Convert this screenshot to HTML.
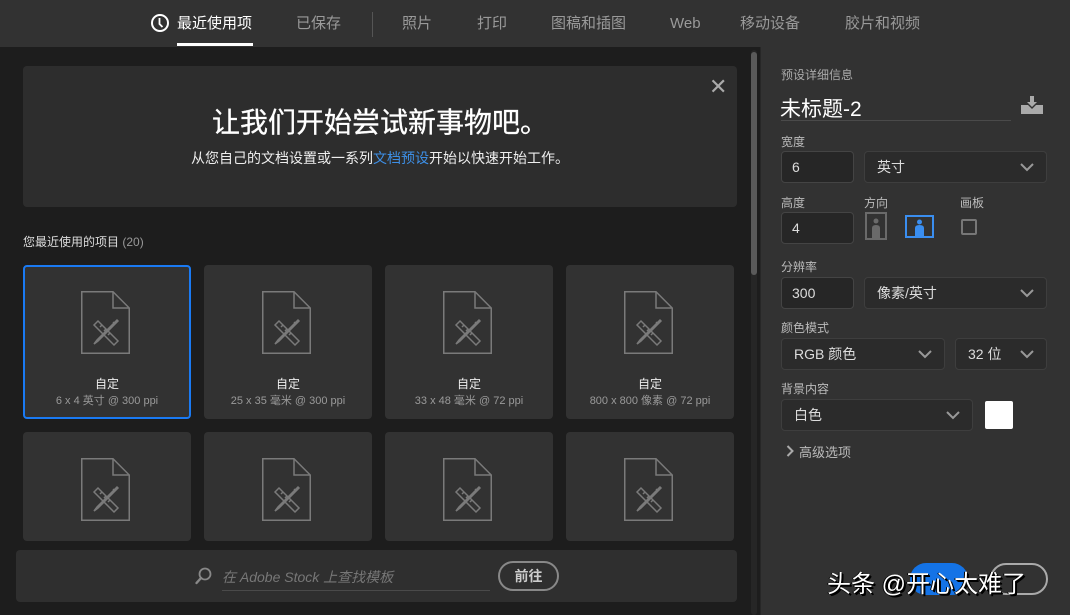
<!DOCTYPE html>
<html><head><meta charset="utf-8"><style>
*{margin:0;padding:0;box-sizing:border-box}
body{width:1070px;height:615px;background:#1d1d1d;font-family:"Liberation Sans","Noto Sans CJK SC",sans-serif;position:relative;overflow:hidden;color:#ddd}
.a{position:absolute}
.nav{left:0;top:0;width:1070px;height:47px;background:#323232}
.nav span{position:absolute;top:0;line-height:48px;font-size:15px;color:#9a9a9a}
.card{position:absolute;width:168px;background:#323232;border-radius:4px}
.card .t{position:absolute;left:0;right:0;top:110px;text-align:center;font-size:12px;color:#eee}
.card .s{position:absolute;left:0;right:0;top:127px;text-align:center;font-size:11px;color:#9a9a9a}
.card svg{position:absolute;left:58px;top:26px}
.lbl{position:absolute;font-size:12px;color:#aaa}
.in{position:absolute;height:32px;background:#262626;border:1px solid #444;border-radius:4px;font-size:14px;color:#ddd;padding:0 10px;line-height:30px}
.dd{position:absolute;height:32px;background:#2b2b2b;border:1px solid #3e3e3e;border-radius:4px;font-size:14px;color:#ddd;padding:0 12px;line-height:30px}
.dd svg{position:absolute;right:12px;top:11px}
</style></head><body>
<div class="a nav">
<svg class="a" style="left:150px;top:13px" width="20" height="20" viewBox="0 0 20 20"><circle cx="10" cy="10" r="8" fill="none" stroke="#fff" stroke-width="2"/><path d="M9.5 5v6l3 3" fill="none" stroke="#fff" stroke-width="1.8"/></svg>
<span style="left:177px;color:#fff">最近使用项</span>
<div class="a" style="left:177px;top:43px;width:76px;height:3px;background:#fff"></div>
<span style="left:296px">已保存</span>
<div class="a" style="left:372px;top:12px;width:1px;height:25px;background:#555"></div>
<span style="left:402px">照片</span>
<span style="left:477px">打印</span>
<span style="left:551px">图稿和插图</span>
<span style="left:670px">Web</span>
<span style="left:740px">移动设备</span>
<span style="left:845px">胶片和视频</span>
</div>
<div class="a" style="left:23px;top:66px;width:714px;height:141px;background:#2d2d2d;border-radius:4px"></div>
<div class="a" style="left:709px;top:74px;font-size:22px;color:#aaa">✕</div>
<div class="a" style="left:0;width:760px;top:101px;text-align:center;font-size:28px;color:#fff;-webkit-text-stroke:0.3px #fff">让我们开始尝试新事物吧。</div>
<div class="a" style="left:0;width:760px;top:148px;text-align:center;font-size:14px;color:#eee">从您自己的文档设置或一系列<span style="color:#3d8fe6">文档预设</span>开始以快速开始工作。</div>
<div class="lbl" style="left:23px;top:233px;color:#ddd">您最近使用的项目 <span style="color:#999">(20)</span></div>

<svg width="0" height="0" style="position:absolute"><defs><g id="ic" fill="none" stroke="#7a7a7a" stroke-width="1.5"><path d="M0.75 0.75H32L48.25 17V62.25H0.75Z"/><path d="M32 0.75V17H48.25"/><path d="M13 34l4-4 20 20-4 4z"/><path d="M19 36l2-2M23 40l2-2M27 44l2-2"/><path d="M36 29l-20 20-3 4 4-3 20-20-1-1z"/><path d="M32 31l2 2"/></g></defs></svg>

<div class="card" style="left:23px;top:265px;height:154px;border:2px solid #1a7af3"><svg width="50" height="64" style="left:56px;top:24px"><use href="#ic"/></svg><div class="t" style="top:108px">自定</div><div class="s" style="top:125px">6 x 4 英寸 @ 300 ppi</div></div>
<div class="card" style="left:204px;top:265px;height:154px"><svg width="50" height="64"><use href="#ic"/></svg><div class="t">自定</div><div class="s">25 x 35 毫米 @ 300 ppi</div></div>
<div class="card" style="left:385px;top:265px;height:154px"><svg width="50" height="64"><use href="#ic"/></svg><div class="t">自定</div><div class="s">33 x 48 毫米 @ 72 ppi</div></div>
<div class="card" style="left:566px;top:265px;height:154px"><svg width="50" height="64"><use href="#ic"/></svg><div class="t">自定</div><div class="s">800 x 800 像素 @ 72 ppi</div></div>
<div class="card" style="left:23px;top:432px;height:109px"><svg width="50" height="64"><use href="#ic"/></svg></div>
<div class="card" style="left:204px;top:432px;height:109px"><svg width="50" height="64"><use href="#ic"/></svg></div>
<div class="card" style="left:385px;top:432px;height:109px"><svg width="50" height="64"><use href="#ic"/></svg></div>
<div class="card" style="left:566px;top:432px;height:109px"><svg width="50" height="64"><use href="#ic"/></svg></div>

<div class="a" style="left:751px;top:50px;width:6px;height:565px;background:#262626;border-radius:3px"></div>
<div class="a" style="left:751px;top:52px;width:6px;height:223px;background:#5a5a5a;border-radius:3px"></div>

<div class="a" style="left:16px;top:550px;width:721px;height:52px;background:#2f2f2f;border-radius:4px"></div>
<svg class="a" style="left:194px;top:566px" width="20" height="20" viewBox="0 0 20 20"><circle cx="11" cy="8" r="5.5" fill="none" stroke="#888" stroke-width="1.8"/><path d="M7 12l-4.5 5" stroke="#888" stroke-width="2.4" stroke-linecap="round"/></svg>
<div class="a" style="left:222px;top:567px;font-size:14px;font-style:italic;color:#777">在 Adobe Stock 上查找模板</div>
<div class="a" style="left:222px;top:590px;width:268px;height:1px;background:#4a4a4a"></div>
<div class="a" style="left:498px;top:561px;width:61px;height:30px;border:2px solid #888;border-radius:15px;text-align:center;font-size:14px;color:#ccc;line-height:26px;font-weight:bold">前往</div>

<div class="a" style="left:760px;top:47px;width:310px;height:568px;background:#323232;border-left:1px solid #272727"></div>
<div class="lbl" style="left:781px;top:66px">预设详细信息</div>
<div class="a" style="left:780px;top:93px;font-size:21px;color:#fff">未标题-2</div>
<div class="a" style="left:781px;top:120px;width:230px;height:1px;background:#4a4a4a"></div>
<svg class="a" style="left:1020px;top:96px" width="24" height="20" viewBox="0 0 24 20"><path d="M10 0h4v6h3l-5 5-5-5h3z" fill="#aaa"/><path d="M1 9h7l4 4 4-4h7v9H1z" fill="#aaa"/></svg>
<div class="lbl" style="left:781px;top:133px;color:#bbb">宽度</div>
<div class="in" style="left:781px;top:151px;width:73px">6</div>
<div class="dd" style="left:864px;top:151px;width:183px">英寸<svg width="14" height="9"><path d="M1 1l6 6 6-6" fill="none" stroke="#999" stroke-width="2"/></svg></div>
<div class="lbl" style="left:781px;top:194px;color:#bbb">高度</div>
<div class="lbl" style="left:864px;top:194px;color:#bbb">方向</div>
<div class="lbl" style="left:960px;top:194px;color:#bbb">画板</div>
<div class="in" style="left:781px;top:212px;width:73px">4</div>
<svg class="a" style="left:865px;top:212px" width="22" height="28"><rect x="1" y="1" width="20" height="26" fill="none" stroke="#6a6a6a" stroke-width="2"/><circle cx="11" cy="9" r="2.5" fill="#6a6a6a"/><path d="M7 27v-11q0-3 4-3t4 3v11z" fill="#6a6a6a"/></svg>
<svg class="a" style="left:905px;top:215px" width="29" height="23"><rect x="1" y="1" width="27" height="21" fill="none" stroke="#3a8ef0" stroke-width="2"/><circle cx="14.5" cy="7" r="2.5" fill="#3a8ef0"/><path d="M10 22v-9q0-3 4.5-3t4.5 3v9z" fill="#3a8ef0"/></svg>
<div class="a" style="left:961px;top:219px;width:16px;height:16px;border:2px solid #777;border-radius:2px"></div>
<div class="lbl" style="left:781px;top:258px;color:#bbb">分辨率</div>
<div class="in" style="left:781px;top:277px;width:73px">300</div>
<div class="dd" style="left:864px;top:277px;width:183px">像素/英寸<svg width="14" height="9"><path d="M1 1l6 6 6-6" fill="none" stroke="#999" stroke-width="2"/></svg></div>
<div class="lbl" style="left:781px;top:319px;color:#bbb">颜色模式</div>
<div class="dd" style="left:781px;top:338px;width:164px">RGB 颜色<svg width="14" height="9"><path d="M1 1l6 6 6-6" fill="none" stroke="#999" stroke-width="2"/></svg></div>
<div class="dd" style="left:955px;top:338px;width:92px">32 位<svg width="14" height="9"><path d="M1 1l6 6 6-6" fill="none" stroke="#999" stroke-width="2"/></svg></div>
<div class="lbl" style="left:781px;top:380px;color:#bbb">背景内容</div>
<div class="dd" style="left:781px;top:399px;width:192px">白色<svg width="14" height="9"><path d="M1 1l6 6 6-6" fill="none" stroke="#999" stroke-width="2"/></svg></div>
<div class="a" style="left:985px;top:401px;width:28px;height:28px;background:#fff;border-radius:2px"></div>
<svg class="a" style="left:786px;top:445px" width="8" height="12"><path d="M1.5 1l5 5-5 5" fill="none" stroke="#aaa" stroke-width="2"/></svg>
<div class="a" style="left:799px;top:442px;font-size:13px;color:#bbb">高级选项</div>

<div class="a" style="left:910px;top:563px;width:58px;height:32px;background:#1473e6;border-radius:16px"></div>
<div class="a" style="left:990px;top:563px;width:58px;height:32px;border:2px solid #aaa;border-radius:16px"></div>
<div class="a" style="left:827px;top:564px;font-size:24px;color:#fff;text-shadow:1px 1px 0 #000,2px 2px 0 #000,-1px 0 0 #000">头条 @开心太难了</div>
</body></html>
